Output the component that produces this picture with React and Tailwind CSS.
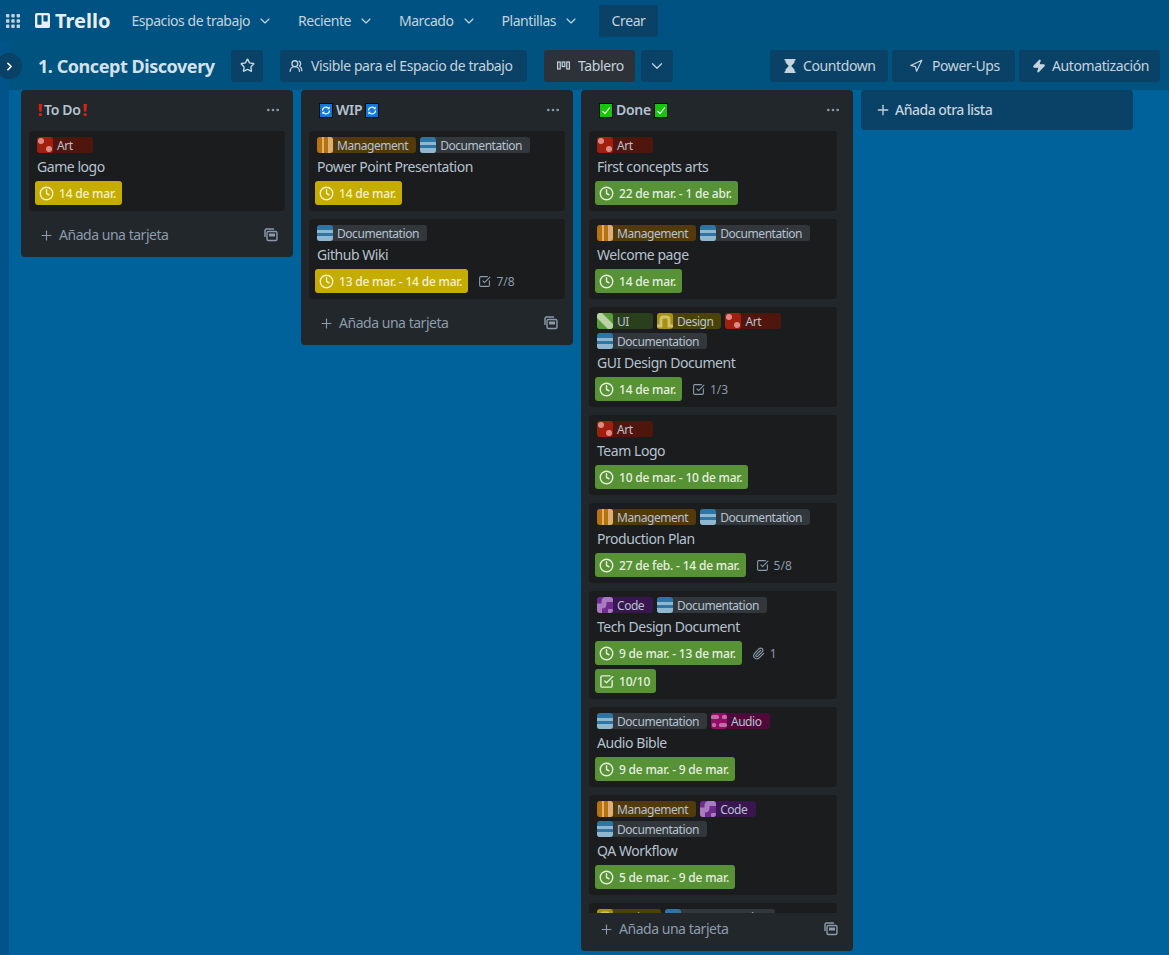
import React from 'react';
import {
  ChevronDown, ChevronRight, Star, UsersRound, Navigation, Zap, Plus, Ellipsis,
  Clock, SquareCheckBig, Paperclip,
} from 'lucide-react';

const labelStyles = {
  Art: 'bg-[#4f160e]',
  Management: 'bg-[#533a0c]',
  Documentation: 'bg-[#32373c]',
  UI: 'bg-[#2a3f1c]',
  Design: 'bg-[#4a4208]',
  Code: 'bg-[#3a1650]',
  Audio: 'bg-[#4e0a3a]',
};

function LabelIcon({ name }) {
  if (name === 'Art') {
    return (
      <svg width="16" height="16" viewBox="0 0 16 16" className="shrink-0 rounded-[3px]">
        <rect width="16" height="16" fill="#a0200f" />
        <circle cx="4" cy="4" r="3" fill="#d98d85" />
        <circle cx="12" cy="12" r="3" fill="#d98d85" />
      </svg>
    );
  }
  if (name === 'Management') {
    return (
      <svg width="16" height="16" viewBox="0 0 16 16" className="shrink-0 rounded-[3px]">
        <rect width="16" height="16" fill="#b5720f" />
        <rect x="5" width="2" height="16" fill="#e0b070" />
        <rect x="11" width="5" height="16" fill="#dcae78" />
      </svg>
    );
  }
  if (name === 'Documentation') {
    return (
      <svg width="16" height="16" viewBox="0 0 16 16" className="shrink-0 rounded-[3px]">
        <rect width="16" height="16" fill="#2e75a3" />
        <rect y="5" width="16" height="3" fill="#8fb8d0" />
        <rect y="11" width="16" height="5" fill="#8fb8d0" />
      </svg>
    );
  }
  if (name === 'UI') {
    return (
      <svg width="16" height="16" viewBox="0 0 16 16" className="shrink-0 rounded-[3px]">
        <rect width="16" height="16" fill="#5a9a3a" />
        <path d="M-2 3L3 -2L18 13L13 18Z" fill="#b9d3a6" />
      </svg>
    );
  }
  if (name === 'Design') {
    return (
      <svg width="16" height="16" viewBox="0 0 16 16" className="shrink-0 rounded-[3px]">
        <rect width="16" height="16" fill="#a5920f" />
        <path d="M0 13H4V7C4 5 5 4 6 4H10C11 4 12 5 12 7V13H16" fill="none" stroke="#d0c070" strokeWidth="3" />
      </svg>
    );
  }
  if (name === 'Code') {
    return (
      <svg width="16" height="16" viewBox="0 0 16 16" className="shrink-0 rounded-[3px]">
        <rect width="16" height="16" fill="#6e2a8c" />
        <path d="M16 2.5H9Q7 2.5 7 4.5V7Q7 9 5 9H2.5V16" fill="none" stroke="#a97cbf" strokeWidth="5" />
        <rect x="11" y="12" width="5" height="4" rx="1" fill="#a97cbf" />
      </svg>
    );
  }
  return (
    <svg width="16" height="16" viewBox="0 0 16 16" className="shrink-0 rounded-[3px]">
      <rect width="16" height="16" fill="#8f0f66" />
      <rect x="0" y="2" width="8" height="4" rx="1.5" fill="#c76aa8" />
      <rect x="11" y="2" width="5" height="4" rx="1.5" fill="#c76aa8" />
      <rect x="1" y="10" width="4" height="4" rx="1.5" fill="#c76aa8" />
      <rect x="8" y="10" width="8" height="4" rx="1.5" fill="#c76aa8" />
    </svg>
  );
}

function Label({ name }) {
  return (
    <span className={`flex h-4 min-w-14 items-center gap-1 rounded-[3px] pr-2 text-xs leading-4 tracking-[-0.45px] text-[#b6c2cf] ${labelStyles[name]}`}>
      <LabelIcon name={name} />
      <span className="pt-[2px]">{name}</span>
    </span>
  );
}

function DueBadge({ text, tone, icon }) {
  const color = tone === 'yellow' ? 'bg-[#c4ad00] text-[#f4f0cf]' : 'bg-[#579237] text-[#e6f0df]';
  const Icon = icon === 'check' ? SquareCheckBig : Clock;
  return (
    <span className={`flex h-6 items-center gap-[5px] rounded-[3px] px-1 text-xs font-medium tracking-[-0.2px] ${color}`}>
      <Icon size={15} strokeWidth={2.25} className="shrink-0" />
      <span className="pt-[2px] pr-[2px]">{text}</span>
    </span>
  );
}

function Meta({ icon: Icon, text }) {
  return (
    <span className="flex h-6 items-center gap-[5px] text-xs text-[#8c9bab]">
      <Icon size={13} strokeWidth={2} />
      <span className="pt-[2px]">{text}</span>
    </span>
  );
}

function Card({ labels, title, due, tone, checks, clip, doneChecks }) {
  return (
    <div className="flex shrink-0 flex-col rounded-[4px] bg-[#1a1c1e] px-2 pt-[6px] pb-[6px]">
      <div className="flex flex-wrap gap-1">
        {labels.map((l, i) => <Label key={i} name={l} />)}
      </div>
      {title && <div className="mt-1 text-sm leading-5 tracking-[-0.45px] text-[#b6c2cf]">{title}</div>}
      {due && (
        <div className="-ml-[2px] mt-1 flex flex-wrap items-center gap-x-[10px] gap-y-1">
          <DueBadge text={due} tone={tone} />
          {clip && <Meta icon={Paperclip} text={clip} />}
          {checks && <Meta icon={SquareCheckBig} text={checks} />}
          {doneChecks && <DueBadge text={doneChecks} tone={tone} icon="check" />}
        </div>
      )}
    </div>
  );
}

function TemplateIcon() {
  return (
    <svg width="14" height="14" viewBox="0 0 14 14" fill="none" stroke="currentColor" strokeWidth="1.4">
      <path d="M1 9V2.5Q1 1 2.5 1H10" />
      <rect x="3" y="3.5" width="10" height="9" rx="1.5" />
      <rect x="5" y="5.5" width="6" height="3" fill="currentColor" stroke="none" />
    </svg>
  );
}

function AddCard({ fill }) {
  return (
    <div className={`flex h-[38px] shrink-0 items-center justify-between pr-[15px] pb-[6px] pl-[18px] text-sm tracking-[-0.47px] text-[#8c9bab] ${fill ? '' : 'mt-2'}`}>
      <span className="flex items-center gap-[5px]">
        <Plus size={15} strokeWidth={1.75} />
        Añada una tarjeta
      </span>
      <TemplateIcon />
    </div>
  );
}

function List({ title, cards, fill }) {
  return (
    <div className={`flex w-[272px] shrink-0 flex-col rounded-[4px] bg-[#22272b] ${fill ? 'h-[861px]' : ''}`}>
      <div className="flex h-[41px] shrink-0 items-center justify-between pr-3 pb-[1px] pl-[18px]">
        <span className="flex items-center gap-[3px] text-sm font-semibold tracking-[-0.3px] text-[#b6c2cf]">{title}</span>
        <Ellipsis size={16} className="text-[#8c9bab]" />
      </div>
      <div className={`flex flex-col gap-2 ${fill ? 'min-h-0 flex-1 overflow-hidden pr-4 pl-2' : 'px-2'}`}>
        {cards.map((c, i) => <Card key={i} {...c} />)}
      </div>
      <AddCard fill={fill} />
    </div>
  );
}

function NavItem({ children }) {
  return (
    <span className="flex items-center gap-[7px] text-sm tracking-[-0.45px] text-[#c5d3de]">
      {children}
      <ChevronDown size={16} strokeWidth={1.75} />
    </span>
  );
}

function BarButton({ children, className = '' }) {
  return (
    <button className={`flex h-8 shrink-0 items-center rounded-[3px] bg-[#0a4167] text-sm tracking-[-0.4px] text-[#c5d3de] ${className}`}>
      {children}
    </button>
  );
}

const Bang = () => <span className="-mx-[2px] flex h-[15px] w-[6px] items-center justify-center text-[16px] font-extrabold text-[#e3200f]">!</span>;
const Sync = () => (
  <svg width="14" height="15" viewBox="0 0 14 15">
    <rect width="14" height="15" fill="#0a0a0a" />
    <rect x="1" y="1" width="12" height="13" fill="#0f78d8" />
    <path d="M3.5 7.5A3.5 3.5 0 0 1 10 5.8M10.5 7.5A3.5 3.5 0 0 1 4 9.2" fill="none" stroke="#ffffff" strokeWidth="1.2" />
    <path d="M10.6 3.6V6.3H8ZM3.4 11.4V8.7H6Z" fill="#ffffff" />
  </svg>
);
const Tick = () => (
  <svg width="14" height="15" viewBox="0 0 14 15">
    <rect width="14" height="15" fill="#0a0a0a" />
    <rect x="1" y="1" width="12" height="13" fill="#16c60c" />
    <path d="M3.5 8L6 10.5L10.8 4.5" fill="none" stroke="#ffffff" strokeWidth="1.2" />
  </svg>
);

const doneCards = [
  { labels: ['Art'], title: 'First concepts arts', due: '22 de mar. - 1 de abr.', tone: 'green' },
  { labels: ['Management', 'Documentation'], title: 'Welcome page', due: '14 de mar.', tone: 'green' },
  { labels: ['UI', 'Design', 'Art', 'Documentation'], title: 'GUI Design Document', due: '14 de mar.', tone: 'green', checks: '1/3' },
  { labels: ['Art'], title: 'Team Logo', due: '10 de mar. - 10 de mar.', tone: 'green' },
  { labels: ['Management', 'Documentation'], title: 'Production Plan', due: '27 de feb. - 14 de mar.', tone: 'green', checks: '5/8' },
  { labels: ['Code', 'Documentation'], title: 'Tech Design Document', due: '9 de mar. - 13 de mar.', tone: 'green', clip: '1', doneChecks: '10/10' },
  { labels: ['Documentation', 'Audio'], title: 'Audio Bible', due: '9 de mar. - 9 de mar.', tone: 'green' },
  { labels: ['Management', 'Code', 'Documentation'], title: 'QA Workflow', due: '5 de mar. - 9 de mar.', tone: 'green' },
  { labels: ['Design', 'Documentation'] },
];

export default function App() {
  return (
    <div className="flex h-[955px] w-[1169px] flex-col overflow-hidden bg-[#00629b] font-['Noto_Sans',sans-serif]">
      {/* top nav */}
      <header className="flex h-[41px] shrink-0 items-center bg-[#005282] pl-[6px]">
        <svg width="14" height="14" viewBox="0 0 14 14" fill="#c5d3de">
          <rect x="0" y="0" width="3.4" height="3.4" rx="0.8" />
          <rect x="5.3" y="0" width="3.4" height="3.4" rx="0.8" />
          <rect x="10.6" y="0" width="3.4" height="3.4" rx="0.8" />
          <rect x="0" y="5.3" width="3.4" height="3.4" rx="0.8" />
          <rect x="5.3" y="5.3" width="3.4" height="3.4" rx="0.8" />
          <rect x="10.6" y="5.3" width="3.4" height="3.4" rx="0.8" />
          <rect x="0" y="10.6" width="3.4" height="3.4" rx="0.8" />
          <rect x="5.3" y="10.6" width="3.4" height="3.4" rx="0.8" />
          <rect x="10.6" y="10.6" width="3.4" height="3.4" rx="0.8" />
        </svg>
        <div className="ml-[15px] flex items-center gap-[5px]">
          <svg width="15" height="15" viewBox="0 0 16 16">
            <rect width="16" height="16" rx="2" fill="#e6eef3" />
            <rect x="2.5" y="2.5" width="4.5" height="10" rx="0.5" fill="#005282" />
            <rect x="9" y="2.5" width="4.5" height="6.5" rx="0.5" fill="#005282" />
          </svg>
          <span className="text-[20px] leading-none font-bold text-[#e6eef3]">Trello</span>
        </div>
        <nav className="ml-[21px] flex items-center gap-[25px]">
          <NavItem>Espacios de trabajo</NavItem>
          <NavItem>Reciente</NavItem>
          <NavItem>Marcado</NavItem>
          <NavItem>Plantillas</NavItem>
        </nav>
        <BarButton className="ml-5 w-[59px] justify-center">Crear</BarButton>
      </header>

      <div className="flex min-h-0 flex-1">
        {/* collapsed sidebar */}
        <aside className="relative w-[9px] shrink-0 bg-[#00548a]">
          <span className="absolute top-[12px] -left-[4px] flex h-[26px] w-[26px] items-center justify-center rounded-full bg-[#0a4167] text-white">
            <ChevronRight size={13} strokeWidth={3} />
          </span>
        </aside>

        <main className="flex min-w-0 flex-1 flex-col">
          {/* board bar */}
          <div className="flex h-[49px] shrink-0 items-center bg-[#00527f] pl-[29px]">
            <h1 className="w-[177px] shrink-0 pt-[2px] text-[18px] font-bold tracking-[-0.45px] whitespace-nowrap text-[#d5e1ea]">1. Concept Discovery</h1>
            <BarButton className="ml-4 w-8 justify-center"><Star size={15} strokeWidth={2.25} /></BarButton>
            <BarButton className="ml-[17px] w-[247px] gap-2 pl-[9px]"><UsersRound size={14} strokeWidth={2.25} />Visible para el Espacio de trabajo</BarButton>
            <BarButton className="ml-[17px] w-[91px] gap-2 !bg-[#2c3238] pl-[13px] text-[#b6c2cf]">
              <svg width="13" height="12" viewBox="0 0 13 12" fill="none" stroke="currentColor" strokeWidth="1.2">
                <rect x="0.6" y="2" width="2.6" height="7" />
                <rect x="5.2" y="2" width="2.6" height="4.5" />
                <rect x="9.8" y="2" width="2.6" height="7" />
              </svg>
              Tablero
            </BarButton>
            <BarButton className="ml-[6px] w-8 justify-center"><ChevronDown size={18} strokeWidth={1.75} /></BarButton>
            <div className="ml-auto flex items-center gap-1 pr-[9px]">
              <BarButton className="w-[118px] gap-[7px] pl-[14px]">
                <svg width="12" height="14" viewBox="0 0 12 14" fill="currentColor">
                  <path d="M0.5 0H11.5V1.5H10.5V3.5L7.2 7L10.5 10.5V12.5H11.5V14H0.5V12.5H1.5V10.5L4.8 7L1.5 3.5V1.5H0.5Z" />
                </svg>
                Countdown
              </BarButton>
              <BarButton className="w-[123px] gap-[9px] pl-[17px]"><Navigation size={14} strokeWidth={2} />Power-Ups</BarButton>
              <BarButton className="w-[141px] gap-[6px] pl-[13px]"><Zap size={14} fill="currentColor" />Automatización</BarButton>
            </div>
          </div>

          {/* lists */}
          <div className="flex items-start gap-2 pl-3">
            <List
              title={<><Bang />To Do<Bang /></>}
              cards={[{ labels: ['Art'], title: 'Game logo', due: '14 de mar.', tone: 'yellow' }]}
            />
            <List
              title={<><Sync />WIP<Sync /></>}
              cards={[
                { labels: ['Management', 'Documentation'], title: 'Power Point Presentation', due: '14 de mar.', tone: 'yellow' },
                { labels: ['Documentation'], title: 'Github Wiki', due: '13 de mar. - 14 de mar.', tone: 'yellow', checks: '7/8' },
              ]}
            />
            <List title={<><Tick />Done<Tick /></>} cards={doneCards} fill />
            <button className="flex h-10 w-[272px] shrink-0 items-center gap-1 rounded-[4px] bg-[#0a4167] pl-[14px] text-sm font-medium tracking-[-0.5px] text-[#c5d3de]">
              <Plus size={16} strokeWidth={2} />
              Añada otra lista
            </button>
          </div>
        </main>
      </div>
    </div>
  );
}
